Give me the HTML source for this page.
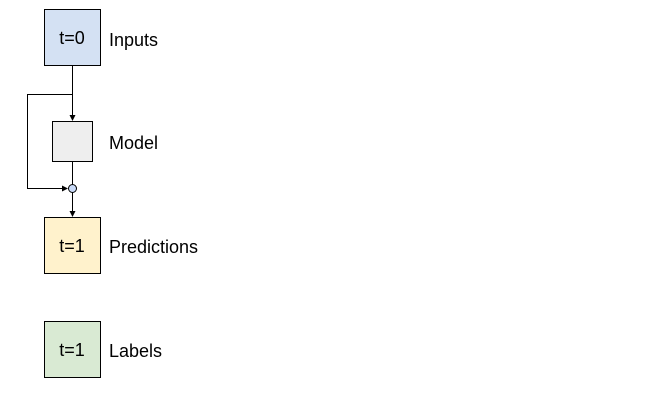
<!DOCTYPE html>
<html><head><style>body{margin:0;background:#fff}</style></head><body>
<svg width="668" height="404" xmlns="http://www.w3.org/2000/svg" font-family="Liberation Sans, Arial, sans-serif" font-size="18">
<defs><marker id="a" markerWidth="6" markerHeight="6" refX="5" refY="3" orient="auto" markerUnits="userSpaceOnUse"><path d="M0,0 L6,3 L0,6 z" fill="#000"/></marker></defs>
<rect x="44.5" y="9.5" width="56" height="56" fill="#d4e1f3" stroke="#000" stroke-width="1"/>
<text x="72" y="44" text-anchor="middle">t=0</text>
<text x="109" y="46">Inputs</text>
<path d="M72.5 65 V120" stroke="#000" fill="none" marker-end="url(#a)"/>
<path d="M72.5 94.5 H27.5 V188.5 H67" stroke="#000" fill="none" marker-end="url(#a)"/>
<rect x="52.5" y="121.5" width="40" height="40" fill="#eeeeee" stroke="#000"/>
<text x="109" y="149">Model</text>
<path d="M72.5 161 V185" stroke="#000"/>
<circle cx="72.5" cy="188.5" r="4" fill="#c9daf8" stroke="#000"/>
<path d="M72.5 192.5 V216" stroke="#000" marker-end="url(#a)"/>
<rect x="44.5" y="217.5" width="56" height="56" fill="#fff2cc" stroke="#000"/>
<text x="72" y="252" text-anchor="middle">t=1</text>
<text x="109" y="253">Predictions</text>
<rect x="44.5" y="321.5" width="56" height="56" fill="#d9ead3" stroke="#000"/>
<text x="72" y="356" text-anchor="middle">t=1</text>
<text x="109" y="357">Labels</text>
</svg>
</body></html>
